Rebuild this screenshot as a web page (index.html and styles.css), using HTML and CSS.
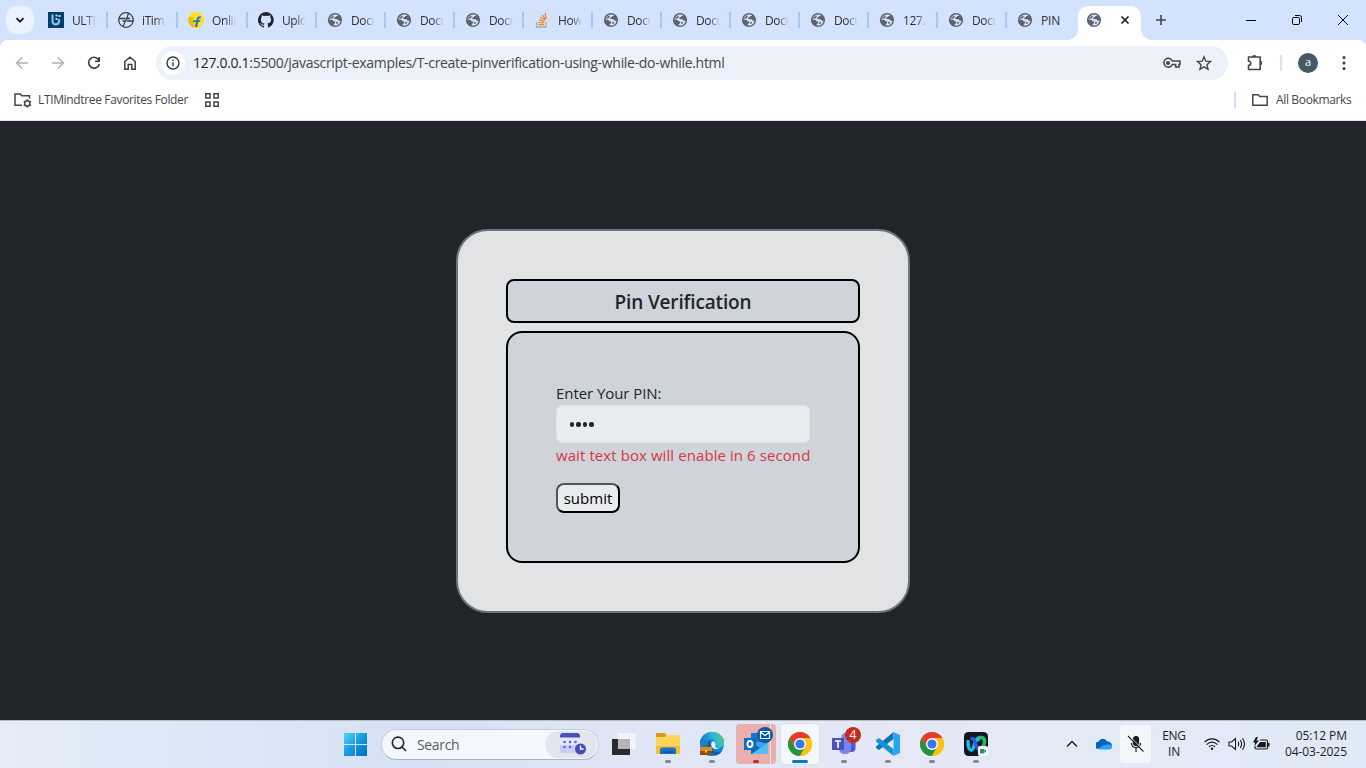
FILE: index.html
```html
<!DOCTYPE html>
<html lang="en">
<head>
<meta charset="utf-8">
<title>PIN Verification</title>
<link rel="stylesheet" href="styles.css">
</head>
<body>
<svg class="defs" width="0" height="0">
  <defs>
    <symbol id="globe" viewBox="0 0 16 16"><circle cx="8" cy="8" r="7.100" fill="#5f6368"/><path fill="#d3e3fd" d="M7.500 2.500c1.200-.3 2.600 0 3.700.7l-.8.8c-.8.100-1.500.2-1.700 1l-1.200.6c-.7.600-.4 1.300.4 1.500l2.300.1c1 .2 1 1.400 2 1.600l1.300-.1c-.1 1.700-1.200 3.300-2.800 4.200-1.400.7-2.800.8-4.100.4l.2-1.200c.8-.1 1.400-.6 1.400-1.500l-.2-1-1.500-.4-.9-1.300-3.100-.3c.1-2.300 2-4.500 5-5.100z"/><path fill="#5f6368" d="M3.500 5.500c1.200-.2 1.700-1.600 3-1.900l.3 1.200-1.500 1.800-2 .3zM9.300 9.700l2 .6-.9 1.500-1.200.2z"/></symbol>
    <symbol id="chrome" viewBox="0 0 24 24"><circle cx="12" cy="12" r="12" fill="#fbc116"/><path fill="#e33b2e" d="M1.600 6A12 12 0 0 1 22.400 6H12L6.800 15z"/><path fill="#229342" d="M1.600 6A12 12 0 0 0 12 24l5.200-9-5.200 3-5.200-3z"/><path fill="#fbc116" d="M12 6h10.400A12 12 0 0 1 12 24l5.200-9z"/><circle cx="12" cy="12" r="6" fill="#fff"/><circle cx="12" cy="12" r="4.600" fill="#3478ed"/></symbol>
  </defs>
</svg>

<header class="tabstrip">
  <button class="tabsearch"><svg width="10" height="10" viewBox="0 0 10 10"><path d="M1.500 3.200 5 6.700l3.500-3.500" fill="none" stroke="#1f1f1f" stroke-width="1.900"/></svg></button>
  <div class="tab wide"><svg class="fav" viewBox="0 0 16 16"><path fill="#003d6f" d="M0 0h16v16H0z"/><path d="M4.500 2.500V9c0 4.500 6.500 4.500 6.500 0V7" fill="none" stroke="#8fbfd8" stroke-width="2.200"/><path fill="#bfe0ef" d="M7.500 2.500h2v2h-2zM10.500 3h2v2h-2zM7.500 6h2v2h-2z"/></svg><span>ULTI</span></div>
  <div class="tab wide"><svg class="fav" viewBox="0 0 16 16" fill="none" stroke="#3c4043" stroke-width="1.300"><circle cx="8" cy="8" r="7.300"/><path d="M1 6.500h6.500M15 9H9M5 14.500l2.500-5.500H4.500M8.500 7l2-5.500M7.500 9 9 6.500h3"/></svg><span>iTim</span></div>
  <div class="tab wide"><svg class="fav" viewBox="0 0 16 16"><circle cx="8" cy="8" r="8" fill="#ffe11b"/><path fill="#f0bd12" d="M1 5h4l2 11C1 14-1 9 1 5z"/><path fill="#2874d0" d="M7 15l1-5H5l.4-1.700h3C8.600 5.200 10 3.800 13 4.200l-.4 2c-1.200-.2-1.800.4-2 2.100h1.800L12 10h-1.800l-1 5z"/></svg><span>Onlin</span></div>
  <div class="tab"><svg class="fav" viewBox="0 0 16 16"><path fill="#1f2328" d="M8 0a8 8 0 0 0-2.500 15.600c.4.100.5-.2.500-.4v-1.500c-2.200.5-2.700-1-2.700-1-.4-.9-.9-1.200-.9-1.200-.7-.5.100-.5.100-.5.800.1 1.200.9 1.200.9.700 1.200 1.900.9 2.300.7.100-.5.300-.9.500-1.100-1.800-.2-3.600-.9-3.600-4 0-.9.300-1.600.8-2.100 0-.2-.3-1 .1-2.100 0 0 .7-.2 2.200.8a7.600 7.600 0 0 1 4 0c1.500-1 2.200-.8 2.200-.8.400 1.100.1 1.900.1 2.100.5.500.8 1.200.8 2.100 0 3.100-1.900 3.700-3.700 3.900.3.300.6.800.6 1.500v2.200c0 .2.100.5.500.4A8 8 0 0 0 8 0z"/></svg><span>Uplo</span></div>
  <div class="tab"><svg class="fav"><use href="#globe"/></svg><span>Docu</span></div>
  <div class="tab"><svg class="fav"><use href="#globe"/></svg><span>Docu</span></div>
  <div class="tab"><svg class="fav"><use href="#globe"/></svg><span>Docu</span></div>
  <div class="tab"><svg class="fav" viewBox="0 0 16 16" fill="none"><path d="M2.500 10v5H12v-5" stroke="#aaa" stroke-width="1.300"/><path d="M4.500 12.700H10M4.500 10.300l5.700.7M5 7.700l5.400 1.900M6.200 5l4.800 3.200M8.200 2.800l3.400 4.600M11 1.200l1.300 5.600" stroke="#f48024" stroke-width="1.200"/></svg><span>How</span></div>
  <div class="tab"><svg class="fav"><use href="#globe"/></svg><span>Docu</span></div>
  <div class="tab"><svg class="fav"><use href="#globe"/></svg><span>Docu</span></div>
  <div class="tab"><svg class="fav"><use href="#globe"/></svg><span>Docu</span></div>
  <div class="tab"><svg class="fav"><use href="#globe"/></svg><span>Docu</span></div>
  <div class="tab"><svg class="fav"><use href="#globe"/></svg><span>127.</span></div>
  <div class="tab"><svg class="fav"><use href="#globe"/></svg><span>Docu</span></div>
  <div class="tab last"><svg class="fav"><use href="#globe"/></svg><span class="full">PIN</span></div>
  <div class="tab-active"><svg class="fav"><use href="#globe"/></svg><svg width="10" height="10" viewBox="0 0 10 10"><path d="M1.500 1.500l7 7m0-7l-7 7" stroke="#1f1f1f" stroke-width="1.700"/></svg></div>
  <svg class="newtab" width="12" height="12" viewBox="0 0 12 12"><path d="M6 1v10M1 6h10" stroke="#444746" stroke-width="1.600"/></svg>
  <div class="winctl">
    <svg width="12" height="12"><path d="M1 6h10" stroke="#000" shape-rendering="crispEdges"/></svg>
    <svg width="12" height="12" fill="none" stroke="#000" viewBox="0 0 12 12"><rect x="1.500" y="3.500" width="7" height="7" rx="1.200"/><path d="M4 1.500h4.500q2 0 2 2V8"/></svg>
    <svg width="12" height="12"><path d="M1 1l10 10m0-10L1 11" stroke="#000"/></svg>
  </div>
</header>

<nav class="toolbar">
  <div class="navicons">
    <svg width="14" height="14" viewBox="0 0 14 14" fill="none" stroke="#aeb1b3" stroke-width="1.500"><path d="M13 7H2M7 1.500 1.500 7 7 12.500"/></svg>
    <svg width="14" height="14" viewBox="0 0 14 14" fill="none" stroke="#aeb1b3" stroke-width="1.500"><path d="M1 7h11M7 1.500 12.500 7 7 12.500"/></svg>
    <svg width="14" height="14" viewBox="0 0 14 14" fill="none" stroke="#3c4043" stroke-width="1.600"><path d="M12 4.500A5.400 5.400 0 1 0 12.300 8M12.200 1v4.200H8"/></svg>
    <svg width="14" height="14" viewBox="0 0 14 14" fill="none" stroke="#3c4043" stroke-width="1.500"><path d="M1.800 13.200V5.500L7 1.200l5.200 4.300v7.700H8.800V8.500H5.200v4.700z"/></svg>
  </div>
  <div class="omnibox">
    <span class="info"><svg width="14" height="14" viewBox="0 0 14 14" fill="none" stroke="#333639" stroke-width="1.400"><circle cx="7" cy="7" r="6"/><path d="M7 6.200v4M7 3.600v1.500"/></svg></span>
    <span class="url"><b>127.0.0.1</b>:5500/javascript-examples/T-create-pinverification-using-while-do-while.html</span>
    <svg class="key" width="18" height="12" viewBox="0 0 18 12" fill="none" stroke="#444746" stroke-width="1.500"><path d="M9.300 4H17v3.500h-1V10h-3.300V7.500H9.300A4.400 4.400 0 1 1 9.300 4z"/><circle cx="5" cy="6" r="1.300" fill="#444746"/></svg>
    <svg class="star" width="16" height="16" viewBox="0 0 16 16" fill="none" stroke="#444746" stroke-width="1.400"><path d="M8 1.800l1.800 4.400 4.700.4-3.600 3.100 1.100 4.600L8 11.800l-4 2.500 1.100-4.600L1.500 6.600l4.700-.4z"/></svg>
  </div>
  <svg class="ext" width="18" height="18" viewBox="0 0 18 18"><path d="M2.500 3h11.700v12.500H2.500v-4.200c3 0 3-4.100 0-4.100z" fill="none" stroke="#444746" stroke-width="1.600" stroke-linejoin="round"/><path fill="#444746" d="M6.200 3a2.100 2.100 0 0 1 4.200 0zM14 6.800a2.300 2.300 0 0 1 0 4.600z"/></svg>
  <i class="vline"></i>
  <span class="avatar">a</span>
  <svg class="dots" width="4" height="16" fill="#444746"><circle cx="2" cy="2.500" r="1.600"/><circle cx="2" cy="8" r="1.600"/><circle cx="2" cy="13.500" r="1.600"/></svg>
</nav>

<div class="bookmarks">
  <svg width="18" height="16" viewBox="0 0 18 16" fill="none" stroke="#444746" stroke-width="1.500"><path d="M8 13.200H1V2h5.200l1.600 1.800h7.700v2.600"/><circle cx="13.300" cy="11.400" r="2.600"/><path d="M13.300 7.200v1.500m0 5.400v1.500M9.700 9.300l1.200.7m4.800 2.800 1.300.7M9.700 13.500l1.200-.7m4.800-2.800 1.300-.7"/></svg>
  <span class="bm-name">LTIMindtree Favorites Folder</span>
  <svg class="apps" width="14" height="14" viewBox="0 0 14 14" fill="none" stroke="#444746" stroke-width="1.500"><path d="M.8.800H5V5H.8zM9 .8h4.200V5H9zM.8 9H5v4.200H.8zM9 9h4.200v4.200H9z"/></svg>
  <div class="allbm"><i class="vline"></i><svg width="16" height="12" viewBox="0 0 16 12" fill="none" stroke="#444746" stroke-width="1.500"><path d="M.8.800h5.400l1.600 1.700h7.400v8.700H.8z" stroke-linejoin="round"/></svg><span>All Bookmarks</span></div>
</div>

<main class="page">
  <section class="card">
    <h1 class="card-title"><span>Pin Verification</span></h1>
    <form class="panel">
      <label for="pin">Enter Your PIN:</label>
      <div class="pin" id="pin"><i></i><i></i><i></i><i></i></div>
      <p class="error">wait text box will enable in 6 second</p>
      <button class="submit" type="button">submit</button>
    </form>
  </section>
</main>

<footer class="taskbar">
  <svg class="start" width="23" height="23" viewBox="0 0 23 23"><defs><linearGradient id="win" x2="1" y2="1"><stop stop-color="#50d5fa"/><stop offset=".5" stop-color="#159ae1"/><stop offset="1" stop-color="#0869c8"/></linearGradient></defs><path fill="url(#win)" d="M0 0h11v11H0zM12 0h11v11H12zM0 12h11v11H0zM12 12h11v11H12z"/></svg>
  <div class="search">
    <svg width="16" height="16" viewBox="0 0 16 16" fill="none" stroke="#252a31" stroke-width="1.700"><circle cx="7" cy="6.800" r="5.700"/><path d="M11 11l4 4"/></svg>
    <span>Search</span>
    <div class="pill"><svg width="27" height="22" viewBox="0 0 27 22"><path fill="#c7cdf4" d="M1 3h20v14q0 3-3 3H4q-3 0-3-3z"/><path fill="#e4e8fd" d="M1 4h20v8H1z"/><path fill="#4a4fc0" d="M1 4.500V3q0-3 3-3h14q3 0 3 3v1.500z"/><g fill="#6067d3"><circle cx="5.500" cy="9" r="1.300"/><circle cx="11" cy="9" r="1.300"/><circle cx="16.500" cy="9" r="1.300"/><circle cx="5.500" cy="14" r="1.300"/><circle cx="11" cy="14" r="1.300"/></g><circle cx="21.500" cy="16" r="5.500" fill="#474bbd"/><path d="M21.500 12.500V16h3" fill="none" stroke="#fff" stroke-width="1.300"/></svg></div>
  </div>
  <div class="apps-row">
    <div class="app"><svg width="24" height="24" viewBox="0 0 24 24"><path fill="#2b2b2b" d="M0 7h18v16H0z"/><path fill="#f4f4f4" d="M6 1h17.500v16H6z"/><path fill="#b4b4b4" d="M6 7h12v10H6z"/></svg></div>
    <div class="app"><svg width="24" height="24" viewBox="0 0 24 24"><path fill="#dc9b12" d="M0 2q0-1 1-1h8l2 3v3H0z"/><path fill="#ffd35c" d="M0 5h9l2-2h12q1 0 1 1v18H0z"/><path fill="#f9bd35" d="M0 14h24v8H0z"/><path fill="#1874cb" d="M4 22v-4q0-2.500 2.500-2.500h11Q20 15.500 20 18v4z"/><path fill="#0e559d" d="M7 19h10v2H7z"/></svg><i class="dot"></i></div>
    <div class="app"><svg width="24" height="24" viewBox="0 0 24 24"><defs><linearGradient id="edge" x2="1" y1=".3"><stop stop-color="#1479c9"/><stop offset=".55" stop-color="#2fb9d8"/><stop offset="1" stop-color="#68d34e"/></linearGradient></defs><path fill="#1583d3" d="M0 12C0 5 5 0 12 0s12 5 12 10c0 6-2 14-12 14S0 18 0 12z"/><path fill="url(#edge)" d="M0 12C0 5 5 0 12 0s12 5 12 10.500c0 4-3 5.500-6 5.500-2.500 0-3.500-1.200-2.700-3 1-3.500-2-5.500-5-5.500C5.500 7.500 1 9 0 12z"/><path fill="#0f5fae" d="M10 8.500c-3 2-4 6-1 11 3 4.500 9 5 13-.5-5 2-10 .5-11-4-.5-3 .5-5-1-6.500z"/><path fill="#e8f5fb" d="M13 9.200c2 .3 3 2 2.300 4.300-.6 2 1.500 3 4.500 2.500-4 2-8.300.5-8.600-3-.1-2 .6-3.200 1.800-3.800z"/><path fill="#d98a20" d="M0 15h12v8H0z"/><path fill="#8e4d0c" d="M0 19h12v4H0zM3.500 13h5v2h-1v-1h-3v1h-1z"/><path fill="#f7c54d" d="M5 18h2v2.500H5z"/></svg><i class="dot"></i></div>
    <div class="app outlook"><svg width="24" height="24" viewBox="0 0 24 24"><path fill="#1976c8" d="M7 1h15v14H7z"/><path fill="#38a4e8" d="M7 10h17v12H7z"/><path fill="#1267b1" d="M7 10l9 6-9 6z"/><path fill="#54bdf2" d="M24 11v11H8z"/><path fill="#0f6cbd" d="M0 6h12v12H0z"/><ellipse cx="6" cy="12" rx="2.500" ry="3" fill="none" stroke="#fff" stroke-width="1.900"/></svg><svg class="mail" width="16" height="16" viewBox="0 0 16 16"><circle cx="8" cy="8" r="8" fill="#0759ad"/><path d="M3.500 4.500h9v7h-9zM3.500 5l4.500 3.500L12.500 5" fill="none" stroke="#fff" stroke-width="1.200"/></svg><i class="dot red"></i></div>
    <div class="app current"><svg width="24" height="24"><use href="#chrome"/></svg><i class="dot blue"></i></div>
    <div class="app"><svg width="24" height="24" viewBox="0 0 24 24"><circle cx="13.500" cy="5" r="4" fill="#7b83eb"/><path fill="#5059c9" d="M17 9h6.500v7q0 4-4 4H17z"/><path fill="#7b83eb" d="M7 9h12v7q0 6-6 6t-6-6z"/><path fill="#4b53bc" d="M0 6h12v12H0z"/><path d="M3 9h6M6 9v7" stroke="#fff" stroke-width="1.600"/></svg><b class="badge">4</b><i class="dot"></i></div>
    <div class="app"><svg width="24" height="24" viewBox="0 0 24 24"><path fill="#0877b9" d="M17.500 0v7L3 18 0 16v-1.500z"/><path fill="#1694d8" d="M0 8l3-2 14.500 11v7L0 9.500z"/><path fill="#27a7ef" d="M17.500 0 24 3v18l-6.500 3z"/></svg><i class="dot"></i></div>
    <div class="app"><svg width="24" height="24"><use href="#chrome"/></svg><i class="dot"></i></div>
    <div class="app"><svg width="24" height="24" viewBox="0 0 24 24"><rect width="24" height="24" rx="4.500" fill="#15171a"/><g fill="none" stroke-width="3.600" stroke-linecap="round"><path d="M14 8c1-4 6.500-3 6.500 1 0 3-1.500 6-3.500 7" stroke="#25b865"/><path d="M4 9.500c0 5 1 8.500 3.500 8.500C11 18 9.500 8 14 6.500" stroke="#12bdea"/><path d="M8 6.500c4 0 3.500 10.500 6.500 10.500" stroke="#245bea"/></g><rect x="14" y="14" width="10" height="10" rx="2" fill="#fff"/><rect x="16" y="17" width="4.500" height="4.500" rx="1" fill="#14966a"/><path fill="#14966a" d="M20 19l2-1.500v3.500z"/></svg><i class="dot"></i></div>
  </div>
  <div class="tray">
    <svg class="up" width="12" height="8" viewBox="0 0 12 8" fill="none" stroke="#1b1b1b" stroke-width="1.400"><path d="M1 6.500l5-5 5 5"/></svg>
    <svg class="cloud" width="16" height="12" viewBox="0 0 16 12"><path fill="#0b61bd" d="M2.500 11a3 3 0 0 1 0-7.200C4-.4 9.500-.2 11 3.500c3 0 5 2 5 4.500L8 11z"/><path fill="#25a5ed" d="M1.500 10.500 8 7l4-.5c2.500-.5 4 1 4 2.500S15 11.500 13 11.500H4z"/></svg>
    <div class="mic"><svg width="18" height="18" viewBox="0 0 18 18" fill="none" stroke="#1b1b1b" stroke-width="1.200"><rect x="6.500" y="1.500" width="5" height="9" rx="2.500" fill="#1b1b1b"/><path d="M4.500 8c0 6 9 6 9 0M9 12.500V17M1 1l15.500 15.500"/><path d="M2.500 1l15 15" stroke="#f5f8fc" stroke-width=".8"/></svg></div>
    <div class="lang"><span>ENG</span><span>IN</span></div>
    <svg class="wifi" width="16" height="14" viewBox="0 0 16 14" fill="none" stroke="#1b1b1b" stroke-width="1.200"><path d="M.6 5.200c4.200-4.400 10.600-4.400 14.800 0M2.700 7.600c3-3.200 7.600-3.200 10.600 0M4.900 9.900c1.800-1.900 4.400-1.900 6.200 0"/><circle cx="8" cy="11.700" r="1.200" fill="#1b1b1b" stroke="none"/></svg>
    <svg class="vol" width="18" height="14" viewBox="0 0 18 14" fill="none" stroke="#1b1b1b" stroke-width="1.100"><path d="M1 5h2.700L7.500 1.500v11L3.700 9H1zM10 4.800q1.400 2.200 0 4.400M12.200 3q2.800 4 0 8M14.500 1.200q4 5.800 0 11.600"/></svg>
    <svg class="bat" width="17" height="14" viewBox="0 0 17 14"><path fill="none" stroke="#1b1b1b" stroke-width="1.200" d="M7 3h6q1.500 0 1.500 1.500v6q0 1.500-1.500 1.500H3.500Q2 12 2 10.500V9"/><path fill="#1b1b1b" d="M7 5h5.800v5.300H3.800V9.500zM15 6h1.500v3.500H15zM3 0 0 5.500h2L1.500 9 6 3.500H3.500L5 0z"/></svg>
    <div class="clock"><span>05:12 PM</span><span>04-03-2025</span></div>
  </div>
</footer>
</body>
</html>
```
FILE: styles.css
```css
* { box-sizing: border-box; }
body { margin: 0; width: 1366px; height: 768px; overflow: hidden; display: flex; flex-direction: column; background: #d3e3fd; font: 12px "Open Sans", "Noto Sans", sans-serif; color: #1f1f1f; white-space: nowrap; }
svg { display: block; flex: none; }
.defs { position: absolute; }
i { font-style: normal; }
.tabstrip { height: 40px; display: flex; align-items: center; background: #d3e3fd; flex: none; }
.tabsearch { width: 28px; height: 28px; margin: 0 4px 0 6px; border: 0; padding: 0; border-radius: 10px; background: #ebf1fd; display: grid; place-items: center; }
.tab { width: 69px; height: 16px; border-right: 2px solid #a8c7fa; display: flex; align-items: center; padding-left: 10px; gap: 8px; flex: none; }
.tab.wide { width: 70px; }
.tab.last { border-color: transparent; }
.tab span { width: 24px; overflow: hidden; line-height: 18px; padding-top: 1px; font-size: 12px; letter-spacing: -.4px; color: #303134; -webkit-mask-image: linear-gradient(90deg, #000 55%, transparent); mask-image: linear-gradient(90deg, #000 55%, transparent); }
.tab span.full { -webkit-mask-image: none; mask-image: none; letter-spacing: -.2px; }
.fav { width: 16px; height: 16px; }
.tab-active { position: relative; width: 63px; height: 34px; margin: 6px 0 0 2px; padding: 0 11px 6px 8px; display: flex; align-items: center; justify-content: space-between; background: #fff; border-radius: 10px 10px 0 0; }
.tab-active::before, .tab-active::after { content: ""; position: absolute; bottom: 0; width: 10px; height: 10px; }
.tab-active::before { left: -10px; background: radial-gradient(circle at 0 0, transparent 9.500px, #fff 10px); }
.tab-active::after { right: -10px; background: radial-gradient(circle at 100% 0, transparent 9.500px, #fff 10px); }
.newtab { margin-left: 14px; }
.winctl { display: flex; gap: 34px; margin: 0 17px 0 auto; }
.toolbar { height: 46px; flex: none; background: #fff; border-radius: 8px 8px 0 0; display: flex; align-items: center; }
.navicons { width: 156px; display: flex; gap: 22px; padding-left: 15px; }
.omnibox { width: 1072px; height: 34px; border-radius: 17px; background: #edf1fa; display: flex; align-items: center; padding: 0 16px 0 5px; }
.info { width: 24px; height: 24px; border-radius: 50%; background: #fff; display: grid; place-items: center; }
.url { margin-left: 8px; font-size: 14px; letter-spacing: -.307px; line-height: 18px; padding-bottom: 1px; color: #45474a; flex: 1; }
.url b { font-weight: 400; color: #1f1f1f; }
.key { margin-right: 15px; }
.ext { margin-left: 18px; }
.vline { width: 2px; height: 16px; background: #d3e3fd; }
.ext + .vline { margin-left: 16px; }
.avatar { width: 20px; height: 20px; margin-left: 16px; border-radius: 50%; background: #455a64; color: #fff; font-size: 11px; line-height: 18px; text-align: center; }
.dots { margin-left: 24px; }
.bookmarks { height: 35px; flex: none; background: #fff; border-bottom: 1px solid #dfe1e5; display: flex; align-items: center; padding: 0 15px 7px 14px; color: #45474a; }
.bm-name { width: 151px; margin-left: 6px; letter-spacing: -.35px; }
.apps { margin-left: 16px; }
.allbm { margin-left: auto; display: flex; align-items: center; }
.allbm svg { margin: 0 8px 0 16px; }
.allbm span { width: 75px; letter-spacing: -.35px; }
.page { flex: 1; background: #212529; display: grid; place-items: center; font-size: 16px; color: #212529; }
.card { width: 454px; padding: 48px; border: 2px solid #6c757d; border-radius: 32px; background: #e2e3e5; }
.card-title { margin: 0 0 8px; height: 44px; border: 2px solid #000; border-radius: 8px; background: #ced4da; font-size: 19px; font-weight: 600; line-height: 42px; text-align: center; letter-spacing: -.15px; }
.panel { height: 232px; padding: 48px; border: 2px solid #000; border-radius: 16px; background: #ced4da; }
label { display: block; height: 24px; line-height: 24px; font-size: 15px; letter-spacing: -.07px; }
.pin { height: 38px; border: 1px solid #dee2e6; border-radius: 6px; background: #e9ecef; display: flex; align-items: center; gap: 2.300px; padding: 2px 0 0 13px; }
.pin i { width: 4.200px; height: 4.200px; border-radius: 50%; background: #212529; }
.error { margin: 0 0 16px; line-height: 24px; font-size: 15px; letter-spacing: .08px; color: #dc3545; }
.submit { display: block; width: 64px; height: 30px; padding: 0; border: 2px outset #000; border-radius: 8px; background: #e9ecef; color: #000; font: 15px/24px "Open Sans", "Noto Sans", sans-serif; }
.taskbar { height: 48px; flex: none; padding-bottom: 1px; border-top: 1px solid #b6bcc4; background: linear-gradient(90deg, #e4edf5 0, #dce7f6 200px, #d6e1f5 420px, #dfe6f5 640px, #e5e8f5 900px, #e3eaf5 1080px, #dfeaf7 1366px); display: flex; align-items: center; }
.start { margin-left: 344px; }
.search { width: 218px; height: 31px; margin-left: 14px; border: 1px solid #c4cddd; border-bottom-color: #aab4c8; border-radius: 16px; background: #f4f7fd; display: flex; align-items: center; padding: 0 1px 0 9px; color: #5b5e63; font-size: 14px; }
.search span { margin-left: 10px; letter-spacing: -.35px; }
.pill { width: 52px; height: 27px; border-radius: 14px; background: #e2e6ec; margin-left: auto; display: grid; place-items: center; padding-left: 3px; }
.apps-row { display: flex; margin-left: 5px; gap: 4px; }
.app { position: relative; width: 40px; height: 40px; display: grid; place-items: center; border-radius: 4px; }
.dot { position: absolute; left: 17px; bottom: 1px; width: 6px; height: 3px; border-radius: 2px; background: #858890; }
.dot.red { background: #c42b1c; }
.dot.blue { width: 16px; background: #0078d4; }
.current { background: #f5f7fd; box-shadow: 0 0 0 1px #dce1ec; width: 38px; margin: 0 1px; }
.current .dot { left: 11px; }
.outlook { background: linear-gradient(90deg, #e8afac 34px, #f7e4e5 34px, #f7e4e5 35px, #e8afac 35px); }
.mail { position: absolute; right: 3px; top: 3px; }
.badge { position: absolute; left: 21px; top: 3px; width: 16px; height: 16px; border-radius: 50%; background: #c42b1c; color: #fff; font-weight: 400; line-height: 15px; text-align: center; }
.tray { margin-left: auto; display: flex; align-items: center; padding-right: 19px; color: #1b1b1b; }
.cloud { margin: 0 8px 0 18px; }
.mic { width: 31px; height: 38px; border-radius: 4px; background: #f3f7fb; display: grid; place-items: center; }
.lang { width: 26px; margin: 0 17px 0 10px; }
.lang, .clock { display: flex; flex-direction: column; line-height: 16px; align-items: center; letter-spacing: -.3px; }
.vol { margin: 0 7px 0 8px; }
.clock { width: 63px; margin-left: 14px; align-items: flex-end; letter-spacing: -.05px; }
```
